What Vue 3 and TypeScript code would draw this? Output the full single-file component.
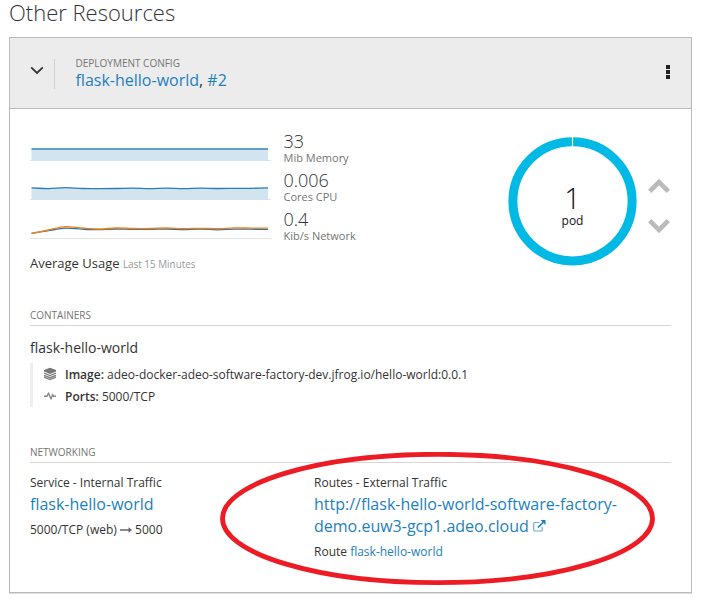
<script setup lang="ts">
interface Line {
  color: string
  points: number[]
}
interface Metric {
  value: string
  label: string
  area: boolean
  lines: Line[]
}

const metrics: Metric[] = [
  {
    value: '33',
    label: 'Mib Memory',
    area: true,
    lines: [{ color: '#3184c0', points: Array(15).fill(18) }],
  },
  {
    value: '0.006',
    label: 'Cores CPU',
    area: true,
    lines: [
      { color: '#2a7db8', points: [17.9, 18.6, 17.6, 18.5, 18.6, 18.5, 18.1, 18.6, 18.1, 18.7, 18.1, 18.5, 18.4, 18.3, 17.8] },
    ],
  },
  {
    value: '0.4',
    label: 'Kib/s Network',
    area: false,
    lines: [
      { color: '#1f77b4', points: [24.3, 21.6, 19.2, 20.2, 20.7, 20, 20.4, 20.4, 20, 20.5, 20, 20.8, 20.1, 20.2, 20.3] },
      { color: '#ff7f0e', points: [24.3, 21, 17.7, 19, 20, 19, 19.5, 19.5, 19, 19.7, 19.3, 19.7, 18.9, 19.1, 19.1] },
    ],
  },
]

const START = 1.5
const STEP = 236.5 / 14

function linePath(points: number[]): string {
  const at = (i: number) => points[Math.max(0, Math.min(points.length - 1, i))]
  return points
    .map((y, i) => {
      const x = START + i * STEP
      if (i === 0) return `M${x} ${y}`
      const c1 = at(i - 1) + (y - at(i - 2)) / 6
      const c2 = y - (at(i + 1) - at(i - 1)) / 6
      return `C${x - (STEP * 2) / 3} ${c1} ${x - STEP / 3} ${c2} ${x} ${y}`
    })
    .join('')
}

function areaPath(points: number[]): string {
  return `${linePath(points)}V30H${START}Z`
}
</script>

<template>
  <main class="page">
    <h1 class="title">Other Resources</h1>
    <section class="card">
      <header class="head">
        <div class="toggle">
          <svg width="14" height="10" viewBox="0 0 14 10"><path d="M1.2 1.300 7 6.900l5.800-5.600" fill="none" stroke="#333" stroke-width="1.8" /></svg>
        </div>
        <div class="names">
          <div class="eyebrow">DEPLOYMENT CONFIG</div>
          <div class="big"><a>flask-hello-world</a>, <a>#2</a></div>
        </div>
        <svg class="kebab" width="4" height="14" viewBox="0 0 4 14"><path d="M0 0h4v4H0zM0 5h4v4H0zM0 10h4v4H0z" fill="#222" /></svg>
      </header>

      <div class="body">
        <div class="overview">
          <div class="metrics">
            <div v-for="m in metrics" :key="m.label" class="metric">
              <svg width="241" height="39" viewBox="0 0 241 39">
                <path d="M0 29.500H241" stroke="#e4e4e4" />
                <template v-if="m.area">
                  <path v-for="l in m.lines" :key="l.color" :d="areaPath(l.points)" fill="#d2e4f0" />
                </template>
                <path v-for="l in m.lines" :key="l.color" :d="linePath(l.points)" fill="none" :stroke="l.color" stroke-width="1.3" />
              </svg>
              <div class="reading">
                <div class="value">{{ m.value }}</div>
                <div class="label">{{ m.label }}</div>
              </div>
            </div>
            <div class="usage">Average Usage <small>Last 15 Minutes</small></div>
          </div>

          <div class="scaler">
            <div class="donut">
              <svg width="130" height="130" viewBox="0 0 130 130">
                <circle cx="65.500" cy="65.300" r="59.600" fill="none" stroke="#00b9e4" stroke-width="9" />
                <path d="M65.500 0v11" stroke="#fff" stroke-width="1.200" />
              </svg>
              <div class="count">
                <div class="num">1</div>
                <div class="pod">pod</div>
              </div>
            </div>
            <div class="arrows">
              <svg width="22" height="14" viewBox="0 0 22 14"><path d="M1.700 12.300 11 3l9.300 9.300" fill="none" stroke="#bbb" stroke-width="4.600" /></svg>
              <svg width="22" height="14" viewBox="0 0 22 14"><path d="M1.700 1.700 11 11l9.300-9.300" fill="none" stroke="#bbb" stroke-width="4.600" /></svg>
            </div>
          </div>
        </div>

        <h2 class="section">CONTAINERS</h2>
        <div class="container-name">flask-hello-world</div>
        <div class="details">
          <div class="detail">
            <svg width="14" height="14" viewBox="0 0 14 14">
              <path d="M7 .800 13 2.900v1.700L7 7 1 4.600V2.900z" fill="#777" />
              <path d="M1 6.200 7 8.600l6-2.400M1 8.300l6 2.400 6-2.400M1 10.200l6 2.300 6-2.300" fill="none" stroke="#808080" stroke-width="1.300" />
            </svg>
            <span><b>Image:</b> adeo-docker-adeo-software-factory-dev.jfrog.io/hello-world:0.0.1</span>
          </div>
          <div class="detail">
            <svg width="14" height="14" viewBox="0 0 14 14"><path d="M1 7.300h3L5.500 4 8 10l1.700-4.500 1 1.800H13" fill="none" stroke="#888" stroke-width="1.400" stroke-linejoin="round" /></svg>
            <span><b>Ports:</b> 5000/TCP</span>
          </div>
        </div>

        <h2 class="section networking">NETWORKING</h2>
        <div class="network">
          <div>
            <div class="text">Service - Internal Traffic</div>
            <div class="big"><a>flask-hello-world</a></div>
            <div class="text after">
              5000/TCP (web)
              <svg width="12" height="8" viewBox="0 0 12 8"><path d="M0 3.300h8.500V1.200L12 4 8.500 6.800V4.700H0z" fill="#666" /></svg>
              5000
            </div>
          </div>
          <div>
            <div class="text">Routes - External Traffic</div>
            <div class="big">
              <a>http://flask-hello-world-software-factory-<br />demo.euw3-gcp1.adeo.cloud
                <svg width="13" height="12" viewBox="0 0 13 12">
                  <path d="M6.500 2.500H1.600Q.700 2.500.700 3.400v6.700q0 .900.900.900h6.700q.900 0 .900-.900V7" fill="none" stroke="#6badd8" stroke-width="1.200" />
                  <path d="M5 7.500 10.500 2" stroke="#1d7fc0" stroke-width="1.700" />
                  <path d="M7.500 0H12.500v5z" fill="#1d7fc0" />
                </svg>
              </a>
            </div>
            <div class="text after">Route <a>flask-hello-world</a></div>
          </div>
        </div>
      </div>
    </section>

    <svg class="highlight" width="436" height="134" viewBox="0 0 436 134">
      <ellipse cx="217.500" cy="66.500" rx="215" ry="64.200" fill="none" stroke="#ed1c24" stroke-width="4.800" />
    </svg>
  </main>
</template>

<style>
body {
  margin: 0;
  background: #fff;
}
</style>

<style scoped>
.page {
  position: relative;
  box-sizing: border-box;
  width: 707px;
  height: 612px;
  padding: 0 15px 0 9px;
  overflow: hidden;
  font-family: 'Open Sans', 'Noto Sans', sans-serif;
  font-size: 12px;
  color: #333;
}
.title {
  margin: 0 0 13px;
  font-size: 22px;
  line-height: 24px;
  font-weight: 300;
}
.card {
  box-sizing: border-box;
  height: 556px;
  border: 1px solid #bbb;
  box-shadow: 0 1px 0 #dcdcdc;
}
.head {
  display: flex;
  align-items: center;
  height: 70px;
  padding: 0 20px;
  background: #ececec;
  border-bottom: 1px solid #bbb;
}
.toggle {
  display: flex;
  align-items: center;
  width: 24px;
  height: 30px;
  border-right: 1px solid #d1d1d1;
  margin-top: 1px;
}
.toggle svg {
  margin-top: -6px;
}
.names {
  flex: 1;
  padding-left: 20.5px;
}
.eyebrow {
  padding-top: 1px;
  font-size: 10px;
  line-height: 14px;
  color: #757575;
}
.names .big {
  margin-top: -1px;
  padding-bottom: 1px;
}
.kebab {
  margin: -2px 1px 0 0;
}
.big {
  font-size: 16px;
  line-height: 22px;
}
a {
  color: #1d7fc0;
}
.body {
  padding: 22px 20px 0;
}
.overview {
  display: flex;
  justify-content: space-between;
  height: 177px;
}
.metric {
  display: flex;
  gap: 12.500px;
  height: 39px;
}
.value {
  font-size: 18px;
  line-height: 20px;
  font-weight: 300;
}
.label {
  font-size: 11px;
  line-height: 14px;
  color: #757575;
}
.usage {
  margin-top: 5px;
  font-size: 13px;
  line-height: 20px;
}
.usage small {
  font-size: 9.900px;
  color: #999;
}
.scaler {
  display: flex;
  gap: 11px;
  padding-top: 5px;
}
.donut {
  display: grid;
  width: 130px;
  height: 130px;
}
.donut > * {
  grid-area: 1 / 1;
}
.count {
  padding: 46px 0 0 1px;
  text-align: center;
  color: #111;
}
.num {
  font-size: 29px;
  line-height: 32px;
  font-weight: 300;
}
.pod {
  line-height: 14px;
}
.arrows {
  display: flex;
  flex-direction: column;
  gap: 26px;
  padding-top: 43px;
  width: 23px;
}
.section {
  margin: 0;
  padding-bottom: 3px;
  border-bottom: 1px solid #d6d6d6;
  font-size: 10px;
  line-height: 14px;
  font-weight: 400;
  color: #757575;
}
.container-name {
  margin: 12px 0 5px;
  font-size: 14px;
  line-height: 20px;
}
.details {
  border-left: 3px solid #eee;
  padding-left: 10px;
}
.detail {
  display: flex;
  gap: 8px;
  height: 22px;
  line-height: 24px;
}
.detail svg {
  margin-top: 4px;
}
b {
  font-weight: 600;
}
.networking {
  margin-top: 38px;
}
.network {
  display: grid;
  grid-template-columns: 284px 1fr;
  padding-top: 11px;
  white-space: nowrap;
}
.text {
  line-height: 18px;
  margin-bottom: 1px;
}
.after {
  margin: 6px 0 0;
}
.highlight {
  position: absolute;
  left: 220px;
  top: 452px;
}
</style>
